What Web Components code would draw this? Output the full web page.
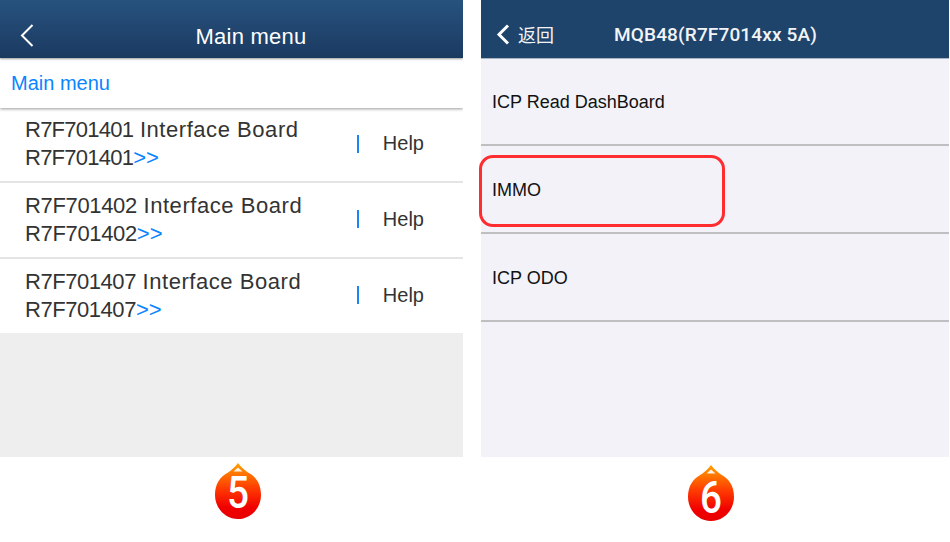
<!DOCTYPE html>
<html>
<head>
<meta charset="utf-8">
<title>Main menu</title>
<style>
    html, body {
        background-color: #fff;
        margin: 0;
        padding: 0;
    }
</style>
</head>
<body>
<guide-page>
    <guide-step num="5">
        <left-screen></left-screen>
    </guide-step>
    <guide-step num="6">
        <right-screen></right-screen>
    </guide-step>
</guide-page>

<script>
const font = `'Liberation Sans', 'Noto Sans CJK SC', sans-serif`;

class GuidePage extends HTMLElement {
    constructor() {
        super();
        this.attachShadow({ mode: 'open' });
        this.shadowRoot.innerHTML = `
            <style>
            :host {
                display: grid;
                grid-template-columns: 463px 468px;
                column-gap: 18px;
                font-family: ${font};
                height: 542px;
                overflow: hidden;
                width: 950px;
            }
            </style>
            <slot></slot>
        `;
    }
}

class GuideStep extends HTMLElement {
    constructor() {
        super();
        const num = this.getAttribute('num');
        this.attachShadow({ mode: 'open' });
        this.shadowRoot.innerHTML = `
            <style>
            :host {
                display: flex;
                flex-direction: column;
            }
            .screen {
                display: flex;
                flex-direction: column;
                height: 457px;
            }
            .badge {
                display: flex;
                justify-content: center;
                padding: 6px 0 0 13px;
            }
            :host([num="6"]) .badge {
                padding: 8px 8px 0 0;
            }
            </style>
            <div class="screen"><slot></slot></div>
            <div class="badge"><step-badge num="${num}">${num}</step-badge></div>
        `;
    }
}

class StepBadge extends HTMLElement {
    constructor() {
        super();
        this.attachShadow({ mode: 'open' });
        this.shadowRoot.innerHTML = `
            <style>
            :host {
                display: block;
                height: 57px;
                position: relative;
                width: 46px;
            }
            svg {
                display: block;
            }
            .num {
                color: #fff;
                font-family: Roboto, sans-serif;
                font-size: 44px;
                font-weight: 500;
                left: 0;
                line-height: 44px;
                position: absolute;
                text-align: center;
                top: 8px;
                transform: scaleX(.88);
                width: 100%;
            }
            :host([num="6"]) .num {
                top: 11px;
            }
            </style>
            <svg width="46" height="57" viewBox="0 0 46 57">
                <defs>
                    <linearGradient id="drop" x1="0" y1="0" x2="0" y2="1">
                        <stop offset="0" stop-color="#ffa000"/>
                        <stop offset=".45" stop-color="#ff3c00"/>
                        <stop offset=".8" stop-color="#f00000"/>
                        <stop offset="1" stop-color="#e80000"/>
                    </linearGradient>
                </defs>
                <path d="M23 0 C26 4 30 7.5 33 9.5 C41 13.5 46 21 46 32 C46 45 36 56 23 56 C10 56 0 45 0 32 C0 21 5 13.5 13 9.5 C16 7.5 20 4 23 0 Z" fill="url(#drop)"/>
                <path d="M23 4.5 L27.5 8.5 L18.5 8.5 Z" fill="#fff" opacity=".9"/>
            </svg>
            <div class="num"><slot></slot></div>
        `;
    }
}

class LeftScreen extends HTMLElement {
    constructor() {
        super();
        this.attachShadow({ mode: 'open' });
        this.shadowRoot.innerHTML = `
            <style>
            :host {
                background-color: #eee;
                display: flex;
                flex: 1;
                flex-direction: column;
                overflow: hidden;
            }
            header {
                align-items: center;
                background: linear-gradient(to bottom, #27527f, #1b3a60);
                box-shadow: 0 1px 2px #0006;
                box-sizing: border-box;
                color: #fff;
                display: flex;
                font-size: 22px;
                height: 58px;
                justify-content: center;
                letter-spacing: .25px;
                padding: 16px 0 0 39px;
                position: relative;
                z-index: 2;
            }
            header svg {
                left: 20px;
                position: absolute;
                top: 24px;
            }
            .crumb {
                background-color: #fff;
                box-shadow: 0 1px 3px #0006;
                color: #0a84ff;
                font-size: 20px;
                height: 50px;
                line-height: 50px;
                padding-left: 11px;
                position: relative;
                z-index: 1;
            }
            </style>
            <header>
                <svg width="14" height="23" viewBox="0 0 14 23"><path d="M12.5 1 L2 11.5 L12.5 22" fill="none" stroke="#fff" stroke-width="2"/></svg>
                Main menu
            </header>
            <div class="crumb">Main menu</div>
            <board-row code="R7F701401" fit="-.75"></board-row>
            <board-row code="R7F701402" fit="-.35"></board-row>
            <board-row code="R7F701407" fit="-.45"></board-row>
        `;
    }
}

class BoardRow extends HTMLElement {
    constructor() {
        super();
        const code = this.getAttribute('code');
        const fit = this.getAttribute('fit');
        this.attachShadow({ mode: 'open' });
        this.shadowRoot.innerHTML = `
            <style>
            :host {
                align-items: center;
                background-color: #fff;
                border-bottom: 2px solid #e4e4e4;
                box-sizing: border-box;
                color: #333;
                display: flex;
                height: 76px;
            }
            :host(:first-of-type) {
                height: 75px;
            }
            :host(:last-of-type) {
                border-bottom: none;
                height: 74px;
            }
            .name {
                flex: 1;
                font-size: 22px;
                letter-spacing: .55px;
                line-height: 28px;
                margin-top: -1px;
                padding-left: 25px;
            }
            .code {
                letter-spacing: ${fit}px;
            }
            .more {
                color: #0a84ff;
                letter-spacing: 0;
            }
            .help {
                font-size: 20px;
                margin-top: -2px;
                padding-right: 39px;
            }
            .bar {
                background-color: #1a86f5;
                height: 18px;
                margin: -2px 24px 0 0;
                width: 1.5px;
            }
            </style>
            <div class="name"><span class="code">${code}</span> Interface Board<br><span class="code">${code}</span><span class="more">&gt;&gt;</span></div>
            <div class="bar"></div>
            <div class="help">Help</div>
        `;
    }
}

class RightScreen extends HTMLElement {
    constructor() {
        super();
        this.attachShadow({ mode: 'open' });
        this.shadowRoot.innerHTML = `
            <style>
            :host {
                background-color: #f2f2f8;
                display: flex;
                flex: 1;
                flex-direction: column;
            }
            header {
                align-items: center;
                background-color: #1f446b;
                border-bottom: 1px solid #a8b4c0;
                box-sizing: border-box;
                color: #f2f4f7;
                display: flex;
                height: 59px;
                padding: 10px 0 0 15px;
            }
            header svg {
                margin-right: 8px;
            }
            .back {
                font-size: 18px;
                margin-right: 60px;
            }
            .title {
                font-family: Roboto, sans-serif;
                font-size: 19px;
                font-weight: 500;
                letter-spacing: .15px;
            }
            </style>
            <header>
                <svg width="14" height="21" viewBox="0 0 14 21"><path d="M12 1.5 L3 10.5 L12 19.5" fill="none" stroke="#fff" stroke-width="3"/></svg>
                <span class="back">返回</span>
                <span class="title">MQB48(R7F7014xx 5A)</span>
            </header>
            <menu-row>ICP Read DashBoard</menu-row>
            <menu-row marked>IMMO</menu-row>
            <menu-row>ICP ODO</menu-row>
        `;
    }
}

class MenuRow extends HTMLElement {
    constructor() {
        super();
        this.attachShadow({ mode: 'open' });
        this.shadowRoot.innerHTML = `
            <style>
            :host {
                align-items: center;
                border-bottom: 2px solid #bfbfc2;
                box-sizing: border-box;
                color: #111;
                display: flex;
                font-size: 18px;
                height: 88px;
                padding: 3px 0 0 11px;
                position: relative;
            }
            :host(:nth-of-type(1)) {
                height: 87px;
                padding-top: 1px;
            }
            :host([marked])::after {
                border: 3px solid #ff2d30;
                border-radius: 14px;
                bottom: 5px;
                box-sizing: border-box;
                content: '';
                left: -2px;
                position: absolute;
                top: 9px;
                width: 246px;
            }
            </style>
            <slot></slot>
        `;
    }
}

customElements.define('guide-page', GuidePage);
customElements.define('guide-step', GuideStep);
customElements.define('step-badge', StepBadge);
customElements.define('left-screen', LeftScreen);
customElements.define('board-row', BoardRow);
customElements.define('right-screen', RightScreen);
customElements.define('menu-row', MenuRow);
</script>
</body>
</html>
